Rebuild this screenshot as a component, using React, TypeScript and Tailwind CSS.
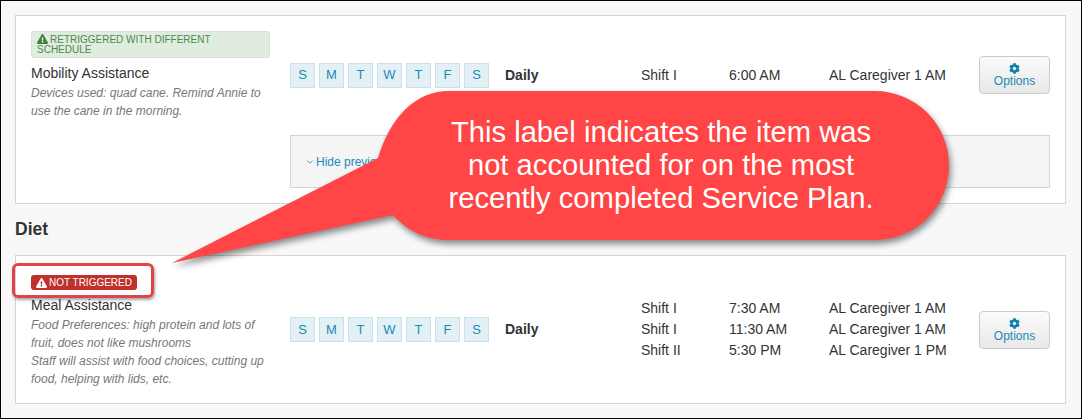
import { ChevronDown } from 'lucide-react'
import { FaCog, FaExclamationTriangle } from 'react-icons/fa'

const DAYS = ['S', 'M', 'T', 'W', 'T', 'F', 'S']

type Shift = { shift: string; time: string; who: string }

function Days() {
  return (
    <div className="flex w-[215px] shrink-0 gap-1">
      {DAYS.map((d, i) => (
        <div
          key={i}
          className="flex h-[25px] w-[25px] items-center justify-center border border-[#c9e2ea] bg-[#e3f0f5] text-[13px] text-[#1a8ab5]"
        >
          {d}
        </div>
      ))}
    </div>
  )
}

function Schedule({ rows }: { rows: Shift[] }) {
  return (
    <div className="flex items-center">
      <div className="w-[136px] shrink-0 text-[14px] font-bold text-[#333]">Daily</div>
      <div className="flex w-[339px] shrink-0 flex-col gap-[5px] pb-[1px] text-[14px] leading-[16px] text-[#333]">
        {rows.map((r, i) => (
          <div key={i} className="flex">
            <div className="w-[88px]">{r.shift}</div>
            <div className="w-[100px]">{r.time}</div>
            <div>{r.who}</div>
          </div>
        ))}
      </div>
    </div>
  )
}

function OptionsButton() {
  return (
    <button className="ml-[-1px] flex h-[38px] w-[71px] shrink-0 flex-col items-center justify-center rounded-[4px] border border-[#ccc] bg-gradient-to-b from-[#fbfbfb] to-[#e8e8e8] pt-[1px] text-[12px] leading-[14px] text-[#1a8ab5]">
      <FaCog className="h-[11px] w-[11px] text-[#0f7fa8]" />
      <span>Options</span>
    </button>
  )
}

function Row({ left, rows }: { left: React.ReactNode; rows: Shift[] }) {
  return (
    <div className="flex items-center">
      <div className="w-[239px] shrink-0">{left}</div>
      <div className="ml-5 flex items-center">
        <Days />
        <Schedule rows={rows} />
        <OptionsButton />
      </div>
    </div>
  )
}

export default function App() {
  return (
    <div className="relative h-[419px] w-[1082px] overflow-hidden border border-black bg-[#f8f8f8] pl-[14px] pt-[14px] font-['Liberation_Sans',Arial,sans-serif]">
      <section className="h-[189px] w-[1051px] border border-[#d4d4d4] bg-white px-[15px] pt-[15px]">
        <Row
          rows={[{ shift: 'Shift I', time: '6:00 AM', who: 'AL Caregiver 1 AM' }]}
          left={
            <div className="h-[88px]">
              <div className="h-[27px] rounded-[3px] border border-[#cfe3cf] bg-[#dfecdf] px-[5px] pt-[2px] text-[10px] leading-[10px] text-[#4a8b4a]">
                <FaExclamationTriangle className="mr-[2px] inline h-[10px] w-[11px] align-[-1px] text-[#3f7f3f]" />
                RETRIGGERED WITH DIFFERENT SCHEDULE
              </div>
              <div className="mt-[7px] text-[14px] leading-[16px] text-[#333]">Mobility Assistance</div>
              <p className="mt-[3px] text-[12px] italic leading-[18px] text-[#777]">
                Devices used: quad cane. Remind Annie to use the cane in the morning.
              </p>
            </div>
          }
        />
        <div className="ml-[259px] mt-[16px] flex h-[53px] w-[760px] items-center border border-[#d4d4d4] bg-[#f5f5f5] pl-[14px] text-[12px] text-[#1a8ab5]">
          <ChevronDown className="mr-[1px] h-[10px] w-[10px]" />
          Hide previous versions
        </div>
      </section>

      <h2 className="mt-[15px] text-[17.5px] font-bold leading-[20px] text-[#333]">
        <span>Diet</span>
      </h2>

      <section className="mt-[16px] h-[149px] w-[1051px] border border-[#d4d4d4] bg-white px-[15px] pt-[16px]">
        <Row
          rows={[
            { shift: 'Shift I', time: '7:30 AM', who: 'AL Caregiver 1 AM' },
            { shift: 'Shift I', time: '11:30 AM', who: 'AL Caregiver 1 AM' },
            { shift: 'Shift II', time: '5:30 PM', who: 'AL Caregiver 1 PM' },
          ]}
          left={
            <div className="h-[115px] pt-[3px]">
              <div className="flex h-[15px] w-[106px] items-center rounded-[3px] bg-[#c0312d] px-[5px] text-[10px] leading-[10px] text-white">
                <FaExclamationTriangle className="mr-[2px] h-[10px] w-[11px]" />
                NOT TRIGGERED
              </div>
              <div className="mt-[7px] text-[14px] leading-[16px] text-[#333]">Meal Assistance</div>
              <p className="mt-[3px] text-[12px] italic leading-[18px] text-[#777]">
                Food Preferences: high protein and lots of fruit, does not like mushrooms
                <br />
                Staff will assist with food choices, cutting up food, helping with lids, etc.
              </p>
            </div>
          }
        />
      </section>

      {/* annotation layer */}
      <div className="absolute left-[11px] top-[262px] h-[35px] w-[142px] rounded-[6px] border-[3px] border-[#e0444a] shadow-[1px_2px_3px_rgba(0,0,0,0.35)]" />
      <svg
        className="absolute left-[-1px] top-[-1px] drop-shadow-[2px_4px_3px_rgba(0,0,0,0.45)]"
        width="1082"
        height="419"
        viewBox="0 0 1082 419"
      >
        <path
          d="M449 91H875A74 74.5 0 0 1 875 240H449C425 240 408 231 393 215L172 263L378 158C390 118 415 91 449 91Z"
          fill="#ff4545"
        />
      </svg>
      <div className="absolute left-[373px] top-[115px] w-[574px] text-center text-[29.2px] leading-[33px] text-white">
        This label indicates the item was
        <br />
        not accounted for on the most
        <br />
        recently completed Service Plan.
      </div>
    </div>
  )
}
